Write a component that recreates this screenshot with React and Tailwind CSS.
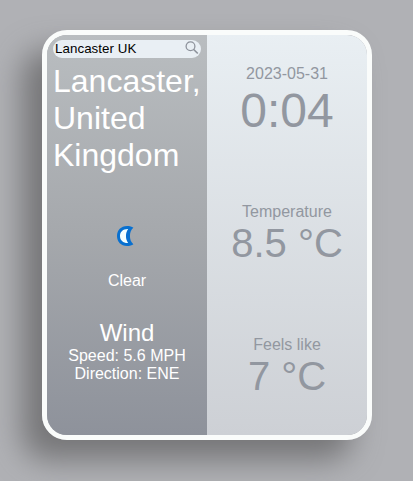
function Reading({ label, value, className }) {
  return (
    <section className={`flex flex-col items-center ${className}`}>
      <p className="text-base leading-[18px]">{label}</p>
      <p className="whitespace-nowrap">{value}</p>
    </section>
  );
}

function SearchIcon() {
  return (
    <svg className="mb-[2px] h-[14px] w-[14px] shrink-0" viewBox="0 0 14 14" fill="none" stroke="#8e939c">
      <circle cx="5.5" cy="5.2" r="4.4" strokeWidth="1.3" />
      <path d="M8.7 8.5 L12.8 12.5" strokeWidth="1.7" />
    </svg>
  );
}

function MoonIcon() {
  return (
    <svg className="h-[20px] w-[17px]" viewBox="0 0 17 20">
      <path
        d="M10 0 C4 0 0 4.2 0 10 C0 15.8 4 20 10 20 C12.6 20 15 19.4 16.4 18.2 C11.8 14.8 11.8 5.2 16.4 1.8 C15 0.6 12.6 0 10 0 Z"
        fill="#0870d0"
      />
      <path
        d="M11.2 3 C6.2 2.8 3 5.6 3 10 C3 14.4 6.2 17.2 11.2 17 C8.2 13.2 8.2 6.8 11.2 3 Z"
        fill="#f4ffff"
      />
    </svg>
  );
}

export default function App() {
  return (
    <main className="flex h-screen w-full justify-center bg-[#b0b1b5] pt-[30px] pl-px font-['Liberation_Sans',Arial,sans-serif]">
      <div className="flex h-[410px] w-[330px] overflow-hidden rounded-[25px] border-[5px] border-[#fafcfb] shadow-[-20px_20px_30px_#767678]">
        <div className="flex w-[160px] flex-col bg-linear-to-b from-[#b9bdc0] via-[#a5a8ac] to-[#8e929b] pt-[5px] text-white">
          <div className="ml-[6px] flex h-[18px] w-[148px] items-center justify-between rounded-[9px] bg-[#e9eff4] pr-[2px] pl-[2px] text-[13.333px] leading-[15px] tracking-[0.06px] text-black">
            <span className="pb-[2px]">Lancaster UK</span>
            <SearchIcon />
          </div>
          <h1 className="mt-[5px] ml-[6px] text-[32px] leading-[37px]">
            Lancaster,<br />United<br />Kingdom
          </h1>
          <div className="mt-[52px] flex justify-center pr-[3px]">
            <MoonIcon />
          </div>
          <p className="mt-[26px] text-center text-base leading-[18px]">Clear</p>
          <section className="mt-[29px] text-center text-base leading-[18px]">
            <h2 className="text-[24px] leading-[28px]">Wind</h2>
            <p>Speed: 5.6 MPH</p>
            <p>Direction: ENE</p>
          </section>
        </div>
        <div className="flex w-[160px] flex-col bg-linear-to-b from-[#e9eff3] to-[#cdd0d5] pt-[30px] text-[#9297a0]">
          <Reading label="2023-05-31" value="0:04" className="h-[138px] text-[48px] leading-[55px]" />
          <Reading label="Temperature" value="8.5 °C" className="h-[133px] text-[40px] leading-[45px]" />
          <Reading label="Feels like" value="7 °C" className="text-[40px] leading-[45px]" />
        </div>
      </div>
    </main>
  );
}
